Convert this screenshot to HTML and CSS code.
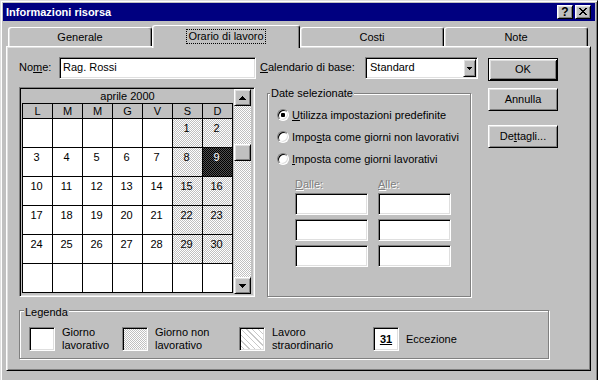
FILE: index.html
```html
<!DOCTYPE html>
<html lang="it">
<head>
    <meta charset="UTF-8">
    <meta name="viewport" content="width=device-width, initial-scale=1.0">
    <title>Informazioni risorsa</title>
    <link rel="stylesheet" href="styles.css">
</head>

<body>
    <div class="window">
        <div class="titlebar">
            <span class="title">Informazioni risorsa</span>
            <div class="caption-btns">
                <button class="cap-btn help">?</button>
                <button class="cap-btn">
                    <svg width="8" height="7" viewBox="0 0 8 7"><path d="M0 0h2v1H0zM6 0h2v1H6zM1 1h2v1H1zM5 1h2v1H5zM2 2h4v1H2zM3 3h2v1H3zM2 4h4v1H2zM1 5h2v1H1zM5 5h2v1H5zM0 6h2v1H0zM6 6h2v1H6z"/></svg>
                </button>
            </div>
        </div>

        <div class="tabs">
            <div class="tab">Generale</div>
            <div class="tab active"><span class="focus">Orario di lavoro</span></div>
            <div class="tab">Costi</div>
            <div class="tab">Note</div>
        </div>

        <div class="panel">
            <div class="top">
                <div class="main">
                    <div class="fields">
                        <label class="lbl lbl-name">No<u>m</u>e:</label>
                        <div class="field name-field">Rag. Rossi</div>
                        <label class="lbl lbl-cal"><u>C</u>alendario di base:</label>
                        <div class="field select">
                            <span class="select-text">Standard</span>
                            <span class="drop">
                                <svg width="5" height="3" viewBox="0 0 5 3"><path d="M0 0h5v1H4v1H3v1H2V2H1V1H0z"/></svg>
                            </span>
                        </div>
                    </div>

                    <div class="work">
                        <div class="calendar">
                            <div class="month">
                                <div class="month-title">aprile 2000</div>
                                <div class="days">
                                    <div class="dn">L</div><div class="dn">M</div><div class="dn">M</div><div class="dn">G</div><div class="dn">V</div><div class="dn">S</div><div class="dn">D</div>

                                    <div class="d"></div><div class="d"></div><div class="d"></div><div class="d"></div><div class="d"></div><div class="d we">1</div><div class="d we">2</div>
                                    <div class="d">3</div><div class="d">4</div><div class="d">5</div><div class="d">6</div><div class="d">7</div><div class="d we">8</div><div class="d sel">9</div>
                                    <div class="d">10</div><div class="d">11</div><div class="d">12</div><div class="d">13</div><div class="d">14</div><div class="d we">15</div><div class="d we">16</div>
                                    <div class="d">17</div><div class="d">18</div><div class="d">19</div><div class="d">20</div><div class="d">21</div><div class="d we">22</div><div class="d we">23</div>
                                    <div class="d">24</div><div class="d">25</div><div class="d">26</div><div class="d">27</div><div class="d">28</div><div class="d we">29</div><div class="d we">30</div>
                                    <div class="d"></div><div class="d"></div><div class="d"></div><div class="d"></div><div class="d"></div><div class="d"></div><div class="d"></div>
                                </div>
                            </div>
                            <div class="vscroll">
                                <div class="raised sb-btn">
                                    <svg width="7" height="4" viewBox="0 0 7 4"><path d="M3 0h1v1h1v1h1v1h1v1H0V3h1V2h1V1h1z"/></svg>
                                </div>
                                <div class="raised thumb"></div>
                                <div class="raised sb-btn down">
                                    <svg width="7" height="4" viewBox="0 0 7 4"><path d="M0 0h7v1H6v1H5v1H4v1H3V3H2V2H1V1H0z"/></svg>
                                </div>
                            </div>
                        </div>

                        <div class="group dates">
                            <span class="group-title">Date selezionate</span>
                            <div class="radios">
                                <div class="radio-row"><span class="radio on"></span><u>U</u>tilizza impostazioni predefinite</div>
                                <div class="radio-row"><span class="radio"></span>Impo<u>s</u>ta come giorni non lavorativi</div>
                                <div class="radio-row"><span class="radio"></span><u>I</u>mposta come giorni lavorativi</div>
                            </div>
                            <div class="range">
                                <span class="off"><u>D</u>alle:</span>
                                <span class="off"><u>A</u>lle:</span>
                                <div class="field"></div><div class="field"></div>
                                <div class="field"></div><div class="field"></div>
                                <div class="field"></div><div class="field"></div>
                            </div>
                        </div>
                    </div>
                </div>

                <div class="buttons">
                    <button class="btn default">OK</button>
                    <button class="btn btn-cancel">Annulla</button>
                    <button class="btn btn-details">De<u>t</u>tagli...</button>
                </div>
            </div>

            <div class="group legend">
                <span class="group-title">Legenda</span>
                <div class="leg-items">
                    <div class="leg-item w1"><span class="swatch"></span><span class="leg-text">Giorno<br>lavorativo</span></div>
                    <div class="leg-item w2"><span class="swatch sw-off"></span><span class="leg-text">Giorno non<br>lavorativo</span></div>
                    <div class="leg-item w3"><span class="swatch sw-extra"></span><span class="leg-text">Lavoro<br>straordinario</span></div>
                    <div class="leg-item"><span class="swatch sw-exc"><u>31</u></span><span class="leg-text">Eccezione</span></div>
                </div>
            </div>
        </div>
    </div>
</body>
</html>
```

FILE: styles.css
```css
*,*::before,*::after{
    box-sizing: border-box;
}

html, body{
    margin: 0;
    padding: 0;
    overflow: hidden;
    background: #c0c0c0;
}

body{
    font-family: "Liberation Sans", Arial, sans-serif;
    font-size: 11px;
    line-height: 13px;
    color: #000;
}

button{
    font: inherit;
    color: inherit;
    margin: 0;
    padding: 0;
    background: #c0c0c0;
}

/* win98 bevels */
.raised, .cap-btn, .btn, .drop, .tab{
    background: #c0c0c0;
    border: 1px solid;
    border-color: #fff #000 #000 #fff;
    box-shadow: inset 1px 1px #dfdfdf, inset -1px -1px #808080;
}

.field, .swatch{
    background: #fff;
    border: 1px solid;
    border-color: #808080 #fff #fff #808080;
    box-shadow: inset 1px 1px #000, inset -1px -1px #dfdfdf;
}

.window{
    width: 598px;
    height: 386px;
    background: #c0c0c0;
    border: 1px solid;
    border-color: #dfdfdf #000 #000 #dfdfdf;
    box-shadow: inset 1px 1px #fff, inset -1px -1px #808080;
    padding: 2px;
}

.titlebar{
    height: 18px;
    background: #000080;
    color: #fff;
    display: flex;
    align-items: center;
    justify-content: space-between;
    padding: 0 4px 0 3px;
}

.title{
    font-weight: bold;
    line-height: 18px;
}

.caption-btns{
    display: flex;
    gap: 2px;
}

.cap-btn{
    width: 16px;
    height: 14px;
    display: flex;
    align-items: center;
    justify-content: center;
    color: #000;
}

.cap-btn svg{
    margin: 0 1px 1px 0;
}

.help{
    font-weight: bold;
    font-size: 12px;
    line-height: 12px;
}

/* tabs */
.tabs{
    display: flex;
    align-items: flex-end;
    height: 21px;
    margin-top: 4px;
    padding-left: 5px;
    position: relative;
    z-index: 1;
}

.tab{
    width: 144px;
    height: 19px;
    border-bottom: none;
    border-radius: 3px 3px 0 0;
    box-shadow: inset 1px 0 #dfdfdf, inset -1px 0 #808080;
    text-align: center;
    padding-top: 3px;
}

.tab.active{
    width: 148px;
    height: 23px;
    margin-bottom: -2px;
    padding-top: 3px;
}

.focus{
    display: inline-block;
    border: 1px dotted #000;
    padding: 0 1px;
}

/* panel */
.panel{
    width: 585px;
    height: 325px;
    margin-left: 3px;
    border: 1px solid;
    border-color: #fff #000 #000 #fff;
    box-shadow: inset 1px 1px #dfdfdf, inset -1px -1px #808080;
    padding: 10px 0 0 12px;
}

.top{
    display: flex;
    align-items: flex-start;
}

.main{
    width: 459px;
}

.fields{
    display: flex;
    align-items: flex-start;
    height: 22px;
}

.lbl{
    padding-top: 4px;
}

.lbl-name{ width: 40px; }
.lbl-cal{ width: 105px; margin-left: 4px; }

.field{
    height: 22px;
    padding: 3px 3px 0;
}

.name-field{ width: 197px; }

.select{
    width: 113px;
    display: flex;
    justify-content: space-between;
    padding: 1px 1px 1px 4px;
}

.select-text{
    padding-top: 2px;
}

.drop{
    width: 13px;
    height: 18px;
    display: flex;
    align-items: center;
    justify-content: center;
}

/* calendar */
.work{
    display: flex;
    align-items: flex-start;
    margin-top: 8px;
}

.calendar{
    width: 236px;
    height: 210px;
    display: flex;
    border: 1px solid;
    border-color: #808080 #fff #fff #808080;
    box-shadow: inset 1px 1px #000, inset -1px -1px #dfdfdf;
    padding: 1px;
}

.month{
    width: 212px;
    padding-left: 1px;
}

.month-title{
    height: 14px;
    line-height: 14px;
    text-align: center;
}

.days{
    display: grid;
    grid-template-columns: repeat(7, 29px);
    grid-template-rows: 14px repeat(6, 28px);
    gap: 1px;
    width: 211px;
    background: #000;
    border: 1px solid #000;
}

.dn{
    background: #c0c0c0;
    text-align: center;
    line-height: 14px;
}

.d{
    background: #fff;
    text-align: center;
    padding: 3px 2px 0 0;
}

.d.we{
    background: repeating-conic-gradient(#c0c0c0 0 25%, #fff 0 50%) 0 0 / 2px 2px;
}

.d.sel{
    background: repeating-conic-gradient(#000 0 25%, #505050 0 50%) 0 0 / 2px 2px;
    color: #fff;
}

.vscroll{
    width: 17px;
    height: 205px;
    margin-left: 1px;
    display: flex;
    flex-direction: column;
    background: repeating-conic-gradient(#c0c0c0 0 25%, #fff 0 50%) 0 0 / 2px 2px;
}

.sb-btn{
    height: 17px;
    flex: none;
    display: flex;
    align-items: center;
    justify-content: center;
}

.thumb{
    height: 17px;
    flex: none;
    margin-top: 38px;
}

.sb-btn.down{
    margin-top: auto;
}

/* group boxes */
.group{
    border: 1px solid #808080;
    box-shadow: inset 1px 1px #fff, 1px 1px #fff;
}

.group-title{
    display: table;
    background: #c0c0c0;
    padding: 0 1px;
}

.dates{
    width: 204px;
    height: 204px;
    margin: 6px 0 0 12px;
}

.dates .group-title{
    margin: -7px 0 0 2px;
}

.radios{
    margin-top: 4px;
    padding-left: 9px;
}

.radio-row{
    height: 22px;
    display: flex;
    align-items: center;
}

.radio{
    width: 12px;
    height: 12px;
    margin-right: 3px;
    border-radius: 50%;
    background: #fff;
    border: 1px solid;
    border-color: #808080 #fff #fff #808080;
    box-shadow: inset 1px 1px #000, inset -1px -1px #dfdfdf;
    display: flex;
    align-items: center;
    justify-content: center;
}

.radio.on::after{
    content: "";
    width: 4px;
    height: 4px;
    border-radius: 1px;
    background: #000;
}

.range{
    display: grid;
    grid-template-columns: 73px 73px;
    column-gap: 10px;
    row-gap: 4px;
    margin-top: 8px;
    padding-left: 27px;
}

.off{
    color: #808080;
    text-shadow: 1px 1px 0 #fff;
    margin-bottom: -2px;
}

/* buttons */
.buttons{
    display: flex;
    flex-direction: column;
    width: 70px;
    margin: 1px 0 0 10px;
}

.btn{
    height: 23px;
    text-align: center;
}

.btn.default{
    border: 1px solid #000;
    box-shadow: inset 1px 1px #fff, inset -1px -1px #000, inset 2px 2px #dfdfdf, inset -2px -2px #808080;
}

.btn-cancel{ margin-top: 7px; }
.btn-details{ margin-top: 14px; }

/* legend */
.legend{
    width: 530px;
    height: 49px;
    margin-top: 13px;
}

.legend .group-title{
    margin: -5px 0 0 4px;
}

.leg-items{
    display: flex;
    align-items: center;
    margin-top: 7px;
    padding-left: 9px;
}

.leg-item{
    display: flex;
    align-items: center;
}

.w1{ width: 93px; }
.w2{ width: 117px; }
.w3{ width: 134px; }

.swatch{
    width: 26px;
    height: 24px;
    flex: none;
}

.sw-off{
    background: repeating-conic-gradient(#c0c0c0 0 25%, #fff 0 50%) 0 0 / 2px 2px;
}

.sw-extra{
    background: repeating-linear-gradient(45deg, #fff 0 3px, #c8c8c8 3px 4px);
}

.sw-exc{
    font-weight: bold;
    display: flex;
    align-items: center;
    justify-content: center;
    padding-top: 1px;
}

.leg-text{
    margin-left: 7px;
}
```
